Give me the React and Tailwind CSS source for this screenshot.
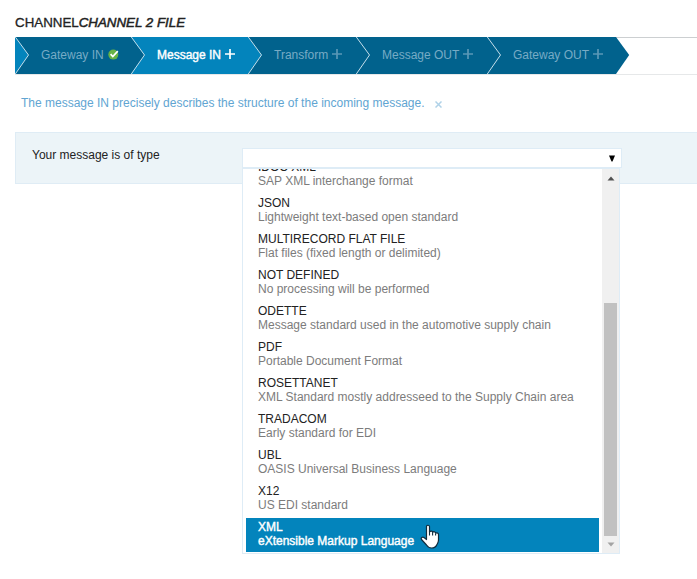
import React from 'react';

const steps = [
  { label: 'Gateway IN', width: 'w-[116px]', icon: 'check', prev: '#0384bc' },
  { label: 'Message IN', width: 'w-[117px]', icon: 'plus', active: true, prev: '#01628d' },
  { label: 'Transform', width: 'w-[108px]', icon: 'plus', prev: '#0384bc' },
  { label: 'Message OUT', width: 'w-[131px]', icon: 'plus', prev: '#01628d' },
  { label: 'Gateway OUT', width: 'w-[129px]', icon: 'plus', prev: '#01628d' },
];

const types = [
  ['IDOC XML', 'SAP XML interchange format'],
  ['JSON', 'Lightweight text-based open standard'],
  ['MULTIRECORD FLAT FILE', 'Flat files (fixed length or delimited)'],
  ['NOT DEFINED', 'No processing will be performed'],
  ['ODETTE', 'Message standard used in the automotive supply chain'],
  ['PDF', 'Portable Document Format'],
  ['ROSETTANET', 'XML Standard mostly addresseed to the Supply Chain area'],
  ['TRADACOM', 'Early standard for EDI'],
  ['UBL', 'OASIS Universal Business Language'],
  ['X12', 'US EDI standard'],
  ['XML', 'eXtensible Markup Language'],
];

function StepIcon({ type }) {
  if (type === 'check') {
    return (
      <svg className="ml-[4px] h-[11px] w-[11px]" viewBox="0 0 11 11">
        <circle cx="5.3" cy="5.6" r="5" fill="#67b346" />
        <path d="M2.6 5.2 4.8 7.5 9.8 2.2" fill="none" stroke="#fff" strokeWidth="1.7" />
      </svg>
    );
  }
  return (
    <svg className="ml-[4px] h-[10px] w-[10px]" viewBox="0 0 10 10">
      <path d="M5 0V10M0 5H10" stroke="currentColor" strokeWidth="1.7" />
    </svg>
  );
}

function Step({ step }) {
  return (
    <li
      className={`flex h-[37px] shrink-0 items-center ${step.width} ${
        step.active ? 'bg-[#0384bc] text-white' : 'bg-[#01628d] text-[#77abc5]'
      }`}
    >
      <svg className="h-[37px] w-[26px] shrink-0" viewBox="0 0 26 37">
        <path d="M0 0 13.5 18 0 37Z" fill={step.prev} />
        <path d="M0.3 0 13.5 18 0.3 37" fill="none" stroke="#c5dfeb" strokeWidth="1" />
      </svg>
      <span className={`pb-[2px] leading-[14px] ${step.active ? '[-webkit-text-stroke:0.4px_white]' : ''}`}>
        {step.label}
      </span>
      <span
        className={`pb-[3px] ${step.active || step.icon === 'check' ? 'opacity-100' : 'opacity-75'}`}
      >
        <StepIcon type={step.icon} />
      </span>
    </li>
  );
}

export default function App() {
  return (
    <div className="h-[579px] w-[697px] overflow-hidden bg-white pl-[15px] pt-[15px] font-['Liberation_Sans',Arial,sans-serif] text-[12px] text-[#222]">
      <h1 className="h-[22px] whitespace-nowrap text-[13.33px] leading-[16px] [-webkit-text-stroke:0.3px_#222]">
        CHANNEL<em className="[-webkit-text-stroke:0.5px_#222]">CHANNEL 2 FILE</em>
      </h1>
      <ul className="flex h-[38px] whitespace-nowrap border-b border-[#e6e8e9]">
        {steps.map((step) => (
          <Step key={step.label} step={step} />
        ))}
        <li className="h-[37px] flex-1 border-t border-[#cccfd1]">
          <svg className="-mt-px h-[37px] w-[14px]" viewBox="0 0 14 37">
            <path d="M0 0 13.2 18 0 37Z" fill="#01628d" />
          </svg>
        </li>
      </ul>
      <div className="flex h-[57px] items-start whitespace-nowrap pl-[6px] pt-[21px] leading-[14px] text-[#61a5d2]">
        <p>The message IN precisely describes the structure of the incoming message.</p>
        <svg className="ml-[10px] mt-[5px] h-[7px] w-[7px]" viewBox="0 0 7 7">
          <path d="m.5.5 6 6m0-6-6 6" stroke="#b0d2e8" strokeWidth="1.5" />
        </svg>
      </div>
      <section className="flex h-[52px] border border-r-0 border-[#dfecf5] bg-[#ecf4f8] pl-[16px] pt-[15px]">
        <label className="w-[210px] leading-[14px]">Your message is of type</label>
        <div className="relative h-[20px] w-[380px] border border-[#deecf6] bg-white">
          <div className="flex h-full items-center justify-end pr-[6px]">
            <svg className="h-[7px] w-[6px]" viewBox="0 0 6 7">
              <path d="M0 .5H6L3.5 6.5h-1Z" fill="#000" />
            </svg>
          </div>
          <div className="absolute -left-px top-[18px] z-10 flex h-[387px] w-[378px] overflow-hidden border border-t-2 border-[#deecf6] bg-white">
            <ul className="-mt-[11px] flex w-[359px] shrink-0 flex-col gap-[2px] whitespace-nowrap pl-[3px] pr-[3px]">
              {types.map(([name, text]) => {
                const selected = name === 'XML';
                return (
                  <li
                    key={name}
                    className={`h-[34px] shrink-0 pl-[12px] pt-[2px] leading-[14px] ${
                      selected ? 'bg-[#0384bc] text-white [-webkit-text-stroke:0.4px_white]' : ''
                    }`}
                  >
                    <div>{name}</div>
                    <div className={selected ? '' : 'text-[#7c7c7c]'}>{text}</div>
                  </li>
                );
              })}
            </ul>
            <div className="flex w-[17px] shrink-0 flex-col items-center bg-[#f0f0f0]">
              <svg className="mt-[7px] h-[5px] w-[8px] shrink-0" viewBox="0 0 8 5">
                <path d="M.5 4.5 4 .5l3.5 4Z" fill="#505050" />
              </svg>
              <div className="mt-[122px] h-[233px] w-[13px] shrink-0 bg-[#c1c1c1]" />
              <svg className="mt-[6px] h-[5px] w-[8px] shrink-0" viewBox="0 0 8 5">
                <path d="M.5.5 4 4.5 7.5.5Z" fill="#a3a3a3" />
              </svg>
            </div>
          </div>
          <svg className="absolute left-[177px] top-[375px] z-20 h-[25px] w-[20px]" viewBox="0 0 20 25">
            <path
              d="M6.5 13V2.5C6.5.8 9.5.8 9.5 2.5V8C10.5 6.5 12.5 7 12.7 8.3 13.8 7.2 15.5 7.8 15.7 9.2 17 8.4 18.5 9.2 18.5 10.7V16c0 2-.7 3-1.5 4.5C16 23 14 24 11.5 24 8.5 24 7.5 22.5 6.5 21L1.5 15.5C.5 14 2.500 12.3 4 13.5L6.5 15.5Z"
              fill="#fff"
              stroke="#102c3d"
              strokeWidth="1.2"
              strokeLinejoin="round"
            />
            <path d="M9.5 7.5v4M12.6 8.5v3M15.6 9.5v2" fill="none" stroke="#102c3d" strokeWidth="1.1" />
          </svg>
        </div>
      </section>
    </div>
  );
}
